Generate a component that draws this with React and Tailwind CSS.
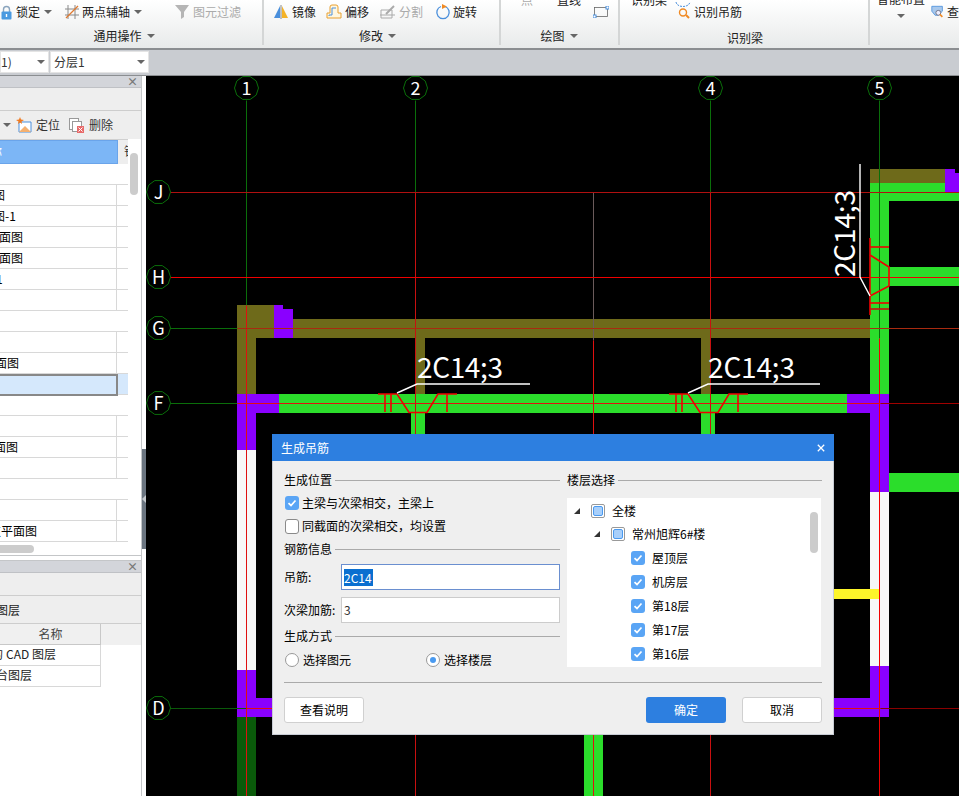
import React from "react";

const GREEN = "#2bdd2b";
const OLIVE = "#6e6a1a";
const PURPLE = "#8a00ff";
const AXIS = "#0a6e0a";

// rect list for the beams, all in page coordinates
const beams = [
  [237, 319, 633, 19, OLIVE],
  [237, 305, 38, 33, OLIVE],
  [237, 305, 19, 89, OLIVE],
  [415, 338, 10, 56, OLIVE],
  [701, 338, 9, 56, OLIVE],
  [274, 305, 9, 33, PURPLE],
  [283, 309, 10, 29, PURPLE],
  [279, 394, 568, 19, GREEN],
  [237, 394, 42, 19, PURPLE],
  [237, 394, 19, 56, PURPLE],
  [237, 450, 19, 220, "#f7f7f7"],
  [237, 670, 19, 47, PURPLE],
  [256, 698, 20, 19, PURPLE],
  [237, 717, 19, 79, "#0a5a0a"],
  [411, 413, 14, 24, GREEN],
  [701, 413, 14, 24, GREEN],
  [847, 394, 42, 19, PURPLE],
  [870, 394, 19, 98, PURPLE],
  [870, 492, 19, 174, "#f7f7f7"],
  [870, 666, 19, 51, PURPLE],
  [830, 698, 40, 19, PURPLE],
  [870, 183, 19, 211, GREEN],
  [870, 183, 75, 18, GREEN],
  [945, 192, 14, 9, GREEN],
  [870, 169, 75, 14, OLIVE],
  [945, 169, 10, 23, PURPLE],
  [955, 173, 4, 19, PURPLE],
  [889, 267, 70, 19, GREEN],
  [889, 473, 70, 19, GREEN],
  [830, 589, 49, 10, "#fdf52a"],
  [584, 730, 19, 66, GREEN],
];

// x1 y1 x2 y2 colour
const axisLines = [
  [246, 100, 246, 305, AXIS],
  [246, 305, 246, 796, "#e01010"],
  [415, 100, 415, 192, AXIS],
  [415, 192, 415, 796, "#c81010"],
  [593, 192, 593, 340, "#6a5a5a"],
  [593, 340, 593, 796, "#e01010"],
  [710, 100, 710, 192, AXIS],
  [710, 192, 710, 796, "#c81010"],
  [879, 100, 879, 338, AXIS],
  [879, 338, 879, 796, "#f00000"],
  [170, 192, 959, 192, "#b01010"],
  [170, 277, 959, 277, "#f00000"],
  [170, 328, 237, 328, AXIS],
  [237, 328, 959, 328, "#a82a10"],
  [170, 403, 237, 403, AXIS],
  [237, 403, 880, 403, "#e01010"],
  [880, 403, 959, 403, "#a00000"],
  [170, 708, 246, 708, "#0a5a0a"],
  [246, 708, 880, 708, "#e01010"],
  [880, 708, 959, 708, "#8a0000"],
];

const bubbles = [
  [246, 88, "1"],
  [415, 88, "2"],
  [710, 88, "4"],
  [879, 88, "5"],
  [158, 192, "J"],
  [158, 277, "H"],
  [158, 328, "G"],
  [158, 403, "F"],
  [158, 708, "D"],
];

function Bubble({ x, y, label }) {
  const pts = [];
  for (let i = 0; i < 10; i++) {
    const a = (Math.PI * 2 * i) / 10;
    pts.push(`${x + 12 * Math.cos(a)},${y + 12 * Math.sin(a)}`);
  }
  return (
    <g>
      <polygon points={pts.join(" ")} fill="none" stroke={AXIS} strokeWidth="1" />
      <text x={x} y={y + 6.5} fill="#fff" fontSize="18" textAnchor="middle" fontFamily="'Noto Sans CJK SC', sans-serif">
        {label}
      </text>
    </g>
  );
}

// the red hanger bar sitting on a beam, x is the left end
function Hanger({ x }) {
  return (
    <g stroke="#f00000" strokeWidth="1.6" fill="none">
      <polyline points={`${x},394 ${x + 19},394 ${x + 31},412.5 ${x + 49},412.5 ${x + 60},394 ${x + 79},394`} />
      <line x1={x + 7} y1="394" x2={x + 7} y2="412" />
      <line x1={x + 13} y1="394" x2={x + 13} y2="412" />
      <line x1={x + 69} y1="394" x2={x + 69} y2="412" />
    </g>
  );
}

function Drawing() {
  return (
    <svg viewBox="146 76 813 720" className="block h-[720px] w-[813px] bg-black">
      {beams.map((b, i) => (
        <rect key={i} x={b[0]} y={b[1]} width={b[2]} height={b[3]} fill={b[4]} />
      ))}
      {axisLines.map((l, i) => (
        <line key={i} x1={l[0] + 0.5} y1={l[1] + 0.5} x2={l[2] + 0.5} y2={l[3] + 0.5} stroke={l[4]} strokeWidth="1" />
      ))}
      {bubbles.map((b) => (
        <Bubble key={b[2]} x={b[0] + 0.5} y={b[1]} label={b[2]} />
      ))}
      <Hanger x={378} />
      <Hanger x={669} />
      <g stroke="#f00000" strokeWidth="1.6" fill="none">
        <line x1="870" y1="238" x2="870" y2="315" />
        <polyline points="870,255 889,267 889,286 870,296" />
        <line x1="870" y1="247" x2="889" y2="247" />
        <line x1="870" y1="303" x2="889" y2="303" />
        <line x1="870" y1="309" x2="889" y2="309" stroke="#c81010" />
      </g>
      <g stroke="#fff" strokeWidth="1.4" fill="none">
        <polyline points="397,393 417,384 530,384" />
        <polyline points="688,393 708,384 820,384" />
        <polyline points="870,296 860,277 860,164" />
      </g>
      <g fill="#fff" fontSize="28" fontFamily="'Noto Sans CJK SC', sans-serif">
        <text x="417" y="378" textLength="86">2C14;3</text>
        <text x="708" y="378" textLength="87">2C14;3</text>
        <text transform="translate(855 277) rotate(-90)" textLength="87">2C14;3</text>
      </g>
    </svg>
  );
}

function Caret({ className = "" }) {
  return <span className={`inline-block h-0 w-0 border-x-[4px] border-t-[4px] border-x-transparent border-t-[#666] ${className}`} />;
}

function RibbonIcon({ children }) {
  return (
    <svg viewBox="0 0 16 16" className="h-[16px] w-[16px] shrink-0">
      {children}
    </svg>
  );
}

function GroupLabel({ children, caret = true, className = "" }) {
  return (
    <div className={`flex h-[20px] items-center justify-center gap-[5px] ${className}`}>
      <span>{children}</span>
      {caret && <Caret />}
    </div>
  );
}

function Ribbon() {
  return (
    <div className="flex h-[50px] shrink-0 border-b-2 border-[#8b8e91] bg-gradient-to-b from-white to-[#e8eaea] text-[#222]">
      <div className="h-[45px] w-[264px] shrink-0 border-r-2 border-[#d4d6d6]">
        <div className="flex h-[24px] items-center">
          <svg viewBox="0 0 11 15" className="ml-[1px] h-[15px] w-[11px]">
            <path d="M2.5 7V4.5a3 3 0 0 1 6 0V7" fill="none" stroke="#8aa4bd" strokeWidth="1.4" />
            <rect x="0.5" y="6.5" width="10" height="8" rx="1" fill="#4a9ae0" />
            <rect x="4.8" y="9" width="1.4" height="3" fill="#fff" />
          </svg>
          <span className="ml-[4px]">锁定</span>
          <Caret className="ml-[4px]" />
          <span className="ml-[12px]">
            <RibbonIcon>
              <path d="M4 1v14M11 1v14M1 5h14M1 11h14" stroke="#8a8a8a" strokeWidth="1" fill="none" />
              <path d="M2 14L14 2" stroke="#e07a30" strokeWidth="1.2" />
            </RibbonIcon>
          </span>
          <span className="ml-[2px]">两点辅轴</span>
          <Caret className="ml-[4px]" />
          <span className="ml-[32px]">
            <RibbonIcon>
              <path d="M1 1h14L10 8v5l-3 2V8z" fill="#b5b5b5" />
            </RibbonIcon>
          </span>
          <span className="ml-[3px] text-[#aaa]">图元过滤</span>
        </div>
        <GroupLabel className="mt-[2px] pr-[14px]">通用操作</GroupLabel>
      </div>

      <div className="h-[45px] w-[237px] shrink-0 border-r-2 border-[#d4d6d6]">
        <div className="flex h-[24px] items-center">
          <svg viewBox="0 0 16 16" className="ml-[9px] h-[16px] w-[16px]">
            <path d="M7 2v12H1z" fill="#4a8fdc" />
            <path d="M9 2v12h6z" fill="#f4b328" />
            <path d="M8 1v14" stroke="#555" strokeWidth="0.7" />
          </svg>
          <span className="ml-[3px]">镜像</span>
          <span className="ml-[10px]">
            <RibbonIcon>
              <path d="M1 14V9h3V3a2 2 0 0 1 2-2h4a2 2 0 0 1 2 2v6h3v5z" fill="#fff7e0" stroke="#e8a030" strokeWidth="1" />
              <path d="M3 12V11h3V4h4" fill="none" stroke="#4a8fdc" strokeWidth="1" />
            </RibbonIcon>
          </span>
          <span className="ml-[3px]">偏移</span>
          <span className="ml-[11px]">
            <RibbonIcon>
              <path d="M1 6h11v8H1zM0 11h15" fill="none" stroke="#aaa" strokeWidth="1" />
              <path d="M6 10l8-8" stroke="#aaa" strokeWidth="2" />
            </RibbonIcon>
          </span>
          <span className="ml-[3px] text-[#aaa]">分割</span>
          <span className="ml-[12px]">
            <RibbonIcon>
              <path d="M6 2.5a6.2 6.2 0 1 0 4 0" fill="none" stroke="#4a8fdc" strokeWidth="1.3" />
              <path d="M7 0l5 2.5L7 5z" fill="#f08a24" />
            </RibbonIcon>
          </span>
          <span className="ml-[2px]">旋转</span>
        </div>
        <GroupLabel className="mt-[2px] pr-[8px]">修改</GroupLabel>
      </div>

      <div className="h-[45px] w-[119px] shrink-0 border-r-2 border-[#d4d6d6]">
        <div className="flex h-[24px] items-center">
          <span className="-mt-[24px] ml-[20px] text-[#aaa]">点</span>
          <span className="-mt-[24px] ml-[24px]">直线</span>
          <svg viewBox="0 0 16 12" className="ml-[12px] h-[12px] w-[16px]">
            <rect x="1.5" y="1.5" width="13" height="9" fill="none" stroke="#666" strokeWidth="0.8" />
            <rect x="0" y="9" width="3" height="3" fill="#fff" stroke="#4a8fdc" strokeWidth="1" />
            <rect x="13" y="0" width="3" height="3" fill="#fff" stroke="#4a8fdc" strokeWidth="1" />
          </svg>
        </div>
        <GroupLabel className="mt-[2px] pr-[1px]">绘图</GroupLabel>
      </div>

      <div className="h-[45px] w-[250px] shrink-0 border-r-2 border-[#d4d6d6]">
        <div className="flex h-[24px] items-center">
          <span className="-mt-[24px] ml-[11px] w-[36px]">识别梁</span>
          <svg viewBox="0 0 16 18" className="-mt-[4px] ml-[8px] h-[18px] w-[16px]">
            <path d="M1 1c1 6 13 6 14 0" fill="none" stroke="#4a8fdc" strokeWidth="1" strokeDasharray="2 1" />
            <circle cx="8" cy="11.5" r="3.5" fill="none" stroke="#f08a24" strokeWidth="1.4" />
            <path d="M11 14l3 3" stroke="#f08a24" strokeWidth="2" />
          </svg>
          <span className="ml-[3px]">识别吊筋</span>
        </div>
        <GroupLabel caret={false} className="mt-[4px] pl-[2px]">识别梁</GroupLabel>
      </div>

      <div className="flex-1 overflow-hidden">
        <div className="flex h-[24px] items-center">
          <div className="ml-[7px] flex w-[48px] flex-col items-center self-start">
            <span className="-mt-[9px] h-[16px] whitespace-nowrap">智能布置</span>
            <Caret className="mt-[7px]" />
          </div>
          <svg viewBox="0 0 16 16" className="ml-[6px] h-[16px] w-[16px]">
            <path d="M1 1h13v6L9 12H5L1 7z" fill="#a8c8ec" stroke="#4a8fdc" strokeWidth="1" />
            <circle cx="9" cy="9" r="3" fill="#eef" stroke="#667" strokeWidth="1" />
            <path d="M11 11l3 3" stroke="#f08a24" strokeWidth="2" />
          </svg>
          <span className="ml-[3px] whitespace-nowrap">查</span>
        </div>
      </div>
    </div>
  );
}

function ComboBar() {
  return (
    <div className="flex h-[26px] shrink-0 border-b border-[#8b8e91] bg-[#c9ccd1] pt-[1px]">
      <div className="flex h-[22px] w-[49px] items-center justify-between border border-[#e4e4e4] bg-white pr-[3px] text-[#333]">
        <span>1)</span>
        <Caret />
      </div>
      <div className="ml-[1px] flex h-[22px] w-[99px] items-center justify-between border border-[#e4e4e4] bg-white pr-[3px] pl-[3px] text-[#333]">
        <span>分层1</span>
        <Caret />
      </div>
    </div>
  );
}

function PanelTitle() {
  return (
    <div className="flex h-[12px] shrink-0 items-center justify-end border-b border-[#bfc1c5] bg-[#d3d5da] pr-[3px] text-[11px] leading-none font-bold text-[#777]">
      ×
    </div>
  );
}

const rows = [
  { line: false },
  { text: "图", cls: "-ml-[7px]" },
  { text: "图-1", cls: "-ml-[7px]" },
  { text: "面图", cls: "-ml-[1px]" },
  { text: "面图", cls: "-ml-[1px]" },
  { text: "1", cls: "-ml-[4px]" },
  {},
  { line: false },
  {},
  { text: "面图", cls: "-ml-[5px]" },
  { selected: true },
  { line: false },
  {},
  { text: "面图", cls: "-ml-[6px]" },
  {},
  { line: false },
  {},
  { text: "支平面图", cls: "-ml-[11px]" },
];

function ListRow({ row }) {
  if (row.selected) {
    return (
      <div className="flex h-[21px] border-b border-[#d8d8d8] bg-[#d5e8fc]">
        <div className="h-[22px] w-[118px] shrink-0 border-2 border-l-0 border-[#888]" />
      </div>
    );
  }
  return (
    <div className="flex h-[21px] border-b border-[#d8d8d8] leading-[19px] text-black">
      <div className={`w-[117px] shrink-0 overflow-hidden whitespace-nowrap ${row.line === false ? "" : "border-r border-[#d8d8d8]"}`}>
        {row.text && <div className={row.cls}>{row.text}</div>}
      </div>
    </div>
  );
}

function Sidebar() {
  return (
    <div className="flex w-[146px] shrink-0 bg-white">
      <div className="flex w-[142px] shrink-0 flex-col border-r border-[#c4c6c8]">
        <div className="flex h-[480px] flex-col border-b border-[#c4c6c8]">
          <PanelTitle />
          <div className="h-[23px] shrink-0 border-b border-[#cdcdcd] bg-[#eeeeee]" />
          <div className="flex h-[28px] shrink-0 items-center bg-[#eeeeee] text-[#333]">
            <Caret className="ml-[3px]" />
            <svg viewBox="0 0 16 16" className="ml-[5px] h-[16px] w-[16px]">
              <path d="M3 5h12v10H3z" fill="#fff" stroke="#4a8fdc" strokeWidth="1" />
              <path d="M3 15l6-6 6 6z" fill="#f4b070" />
              <path d="M4 0l1 2.5L8 3 5.500 4.500 6 7 4 5.500 2 7l.5-2.500L0 3l3-.5z" fill="#f07a20" />
            </svg>
            <span className="ml-[4px]">定位</span>
            <svg viewBox="0 0 15 15" className="ml-[9px] h-[15px] w-[15px]">
              <rect x="0.500" y="0.500" width="9" height="11" fill="#fff" stroke="#999" />
              <rect x="3.500" y="3.500" width="9" height="10" fill="#fff" stroke="#999" />
              <rect x="8" y="8" width="7" height="7" fill="#e86a6a" />
              <path d="M9.500 9.500l4 4m0-4l-4 4" stroke="#fff" strokeWidth="1" />
            </svg>
            <span className="ml-[5px]">删除</span>
          </div>
          <div className="flex min-h-0 flex-1">
            <div className="w-[128px] shrink-0 overflow-hidden">
              <div className="flex h-[25px] border-t border-[#d0d0d0]">
                <div className="h-[24px] w-[118px] shrink-0 border border-l-0 border-[#6aa4ea] bg-[#7cb6f6] text-white">
                  <div className="-ml-[10px] leading-[22px]">称</div>
                </div>
                <div className="flex-1 overflow-hidden bg-[#eeeeee] pl-[6px] leading-[22px] whitespace-nowrap text-[#333]">
                  钢
                </div>
              </div>
              {rows.map((r, i) => (
                <ListRow key={i} row={r} />
              ))}
              <div className="mt-[3px] h-[8px] w-[34px] rounded-r-full bg-[#cccccc]" />
            </div>
            <div className="flex-1 pt-[14px] pl-[2px]">
              <div className="h-[42px] w-[8px] rounded-full bg-[#cccccc]" />
            </div>
          </div>
        </div>
        <div className="h-[4px] shrink-0 bg-white" />
        <div className="flex flex-1 flex-col border-t border-[#c4c6c8]">
          <PanelTitle />
          <div className="h-[23px] shrink-0 border-b border-[#cdcdcd] bg-[#eeeeee]" />
          <div className="flex h-[28px] shrink-0 items-center border-b border-[#cdcdcd] bg-[#eeeeee] leading-none text-[#222]">
            <span className="-ml-[4px]">图层</span>
          </div>
          <div className="h-[21px] shrink-0 bg-[#f0f0f0]">
            <div className="flex h-[21px] w-[101px] items-center justify-center border-r border-b border-[#c8c8c8] pl-[1px] text-[#444]">
              名称
            </div>
          </div>
          <div className="flex h-[21px] w-[101px] items-center overflow-hidden border-r border-b border-[#d8d8d8] pb-[2px] whitespace-nowrap text-[#222]">
            <span className="-ml-[9px]">的</span>
            <span className="ml-[3px]">CAD 图层</span>
          </div>
          <div className="flex h-[21px] w-[101px] items-center overflow-hidden border-r border-b border-[#d8d8d8] pb-[2px] whitespace-nowrap text-[#222]">
            <span className="-ml-[4px]">台图层</span>
          </div>
        </div>
      </div>
      <div className="w-[4px] shrink-0 pt-[373px]">
        <div className="relative h-[100px] bg-[#6b7580]">
          <span className="absolute top-[46px] left-0 h-0 w-0 border-y-[4px] border-r-[4px] border-y-transparent border-r-[#c4c8cc]" />
        </div>
      </div>
    </div>
  );
}

function Section({ title, className = "" }) {
  return (
    <div className={`flex h-[20px] items-center gap-[3px] ${className}`}>
      <span className="whitespace-nowrap">{title}</span>
      <div className="h-px flex-1 bg-[#aaaaaa]" />
    </div>
  );
}

function CheckBox({ checked }) {
  if (!checked) {
    return <span className="h-[15px] w-[14px] shrink-0 rounded-[3px] border border-[#8a8a8a] bg-white" />;
  }
  return (
    <span className="flex h-[14px] w-[14px] shrink-0 items-center justify-center rounded-[3px] bg-[#5aa5f5]">
      <svg viewBox="0 0 10 10" className="h-[10px] w-[10px]">
        <path d="M1.500 5.200l2.500 2.300 4.500-5" fill="none" stroke="#fff" strokeWidth="1.700" />
      </svg>
    </span>
  );
}

function HalfBox() {
  return (
    <span className="flex h-[14px] w-[14px] shrink-0 items-center justify-center rounded-[2px] border border-[#999] bg-white">
      <span className="h-[10px] w-[10px] rounded-[2px] border border-[#4a9af0] bg-[#a8cffa]" />
    </span>
  );
}

function Radio({ on }) {
  return (
    <span className="flex h-[14px] w-[14px] shrink-0 items-center justify-center rounded-full border border-[#999] bg-white">
      {on && <span className="h-[6px] w-[6px] rounded-full bg-[#4a9af0]" />}
    </span>
  );
}

function Arrow() {
  return (
    <svg viewBox="0 0 6 6" className="h-[6px] w-[6px] shrink-0">
      <path d="M6 0v6H0z" fill="#333" />
    </svg>
  );
}

const floors = ["屋顶层", "机房层", "第18层", "第17层", "第16层"];

function Dialog() {
  return (
    <div className="absolute top-[358px] left-[126px] flex h-[301px] w-[562px] flex-col border border-t-0 border-[#c8ccd4] bg-[#efefef] text-black">
      <div className="-mx-px flex h-[27px] shrink-0 items-center justify-between bg-[#2d7fe0] pr-[9px] pl-[9px] text-white">
        <span>生成吊筋</span>
        <svg viewBox="0 0 10 10" className="h-[8px] w-[8px]">
          <path d="M1 1l8 8m0-8l-8 8" stroke="#fff" strokeWidth="1.600" />
        </svg>
      </div>
      <div className="flex flex-1 flex-col pr-[11px] pl-[11px]">
        <div className="flex h-[221px] shrink-0 gap-[7px]">
          <div className="w-[276px] shrink-0 pt-[9px]">
            <Section title="生成位置" />
            <div className="mt-[3px] flex h-[20px] items-center pl-[1px]">
              <CheckBox checked />
              <span className="ml-[3px]">主梁与次梁相交，主梁上</span>
            </div>
            <div className="mt-[3px] flex h-[20px] items-center pl-[1px]">
              <CheckBox />
              <span className="ml-[3px]">同截面的次梁相交，均设置</span>
            </div>
            <Section title="钢筋信息" className="mt-[3px]" />
            <div className="mt-[5px] flex h-[26px] items-center">
              <span className="w-[57px] shrink-0">吊筋:</span>
              <div className="flex h-[26px] flex-1 items-center border border-[#6a8fd0] bg-white pl-[2px]">
                <span className="bg-[#0a6fd0] pr-[1px] leading-[17px] text-white">2C14</span>
              </div>
            </div>
            <div className="mt-[7px] flex h-[26px] items-center">
              <span className="w-[57px] shrink-0 whitespace-nowrap">次梁加筋:</span>
              <div className="flex h-[26px] flex-1 items-center border border-[#cccccc] bg-white pl-[2px] text-[#333]">3</div>
            </div>
            <Section title="生成方式" className="mt-[3px]" />
            <div className="mt-[4px] flex h-[20px] items-center pl-[1px]">
              <Radio />
              <span className="ml-[4px] w-[123px]">选择图元</span>
              <Radio on />
              <span className="ml-[4px]">选择楼层</span>
            </div>
          </div>
          <div className="flex-1 pt-[9px]">
            <Section title="楼层选择" />
            <div className="relative mt-[8px] mr-[1px] h-[169px] overflow-hidden bg-white pt-[1px]">
              <div className="flex h-[23px] items-center pl-[7px]">
                <Arrow />
                <span className="ml-[11px]"><HalfBox /></span>
                <span className="ml-[7px]">全楼</span>
              </div>
              <div className="flex h-[23px] items-center pl-[27px]">
                <Arrow />
                <span className="ml-[11px]"><HalfBox /></span>
                <span className="ml-[7px]">常州旭辉6#楼</span>
              </div>
              {floors.map((f) => (
                <div key={f} className="mt-px flex h-[23px] items-center pl-[64px]">
                  <CheckBox checked />
                  <span className="ml-[7px]">{f}</span>
                </div>
              ))}
              <div className="absolute top-[14px] right-[3px] h-[41px] w-[8px] rounded-full bg-[#cccccc]" />
            </div>
          </div>
        </div>
        <div className="h-px shrink-0 bg-[#aaaaaa]" />
        <div className="mt-[14px] flex justify-between">
          <button className="h-[26px] w-[80px] rounded-[3px] border border-[#d0d0d0] bg-white">查看说明</button>
          <div className="flex gap-[16px]">
            <button className="h-[26px] w-[80px] rounded-[3px] bg-[#2d7fe0] text-white">确定</button>
            <button className="h-[26px] w-[80px] rounded-[3px] border border-[#d0d0d0] bg-white">取消</button>
          </div>
        </div>
      </div>
    </div>
  );
}

export default function App() {
  return (
    <div className="flex h-[796px] w-[959px] flex-col overflow-hidden bg-[#eeeeee] font-['Noto_Sans_CJK_SC',sans-serif] text-xs">
      <Ribbon />
      <ComboBar />
      <div className="flex min-h-0 flex-1">
        <Sidebar />
        <div className="relative flex-1">
          <Drawing />
          <Dialog />
        </div>
      </div>
    </div>
  );
}
